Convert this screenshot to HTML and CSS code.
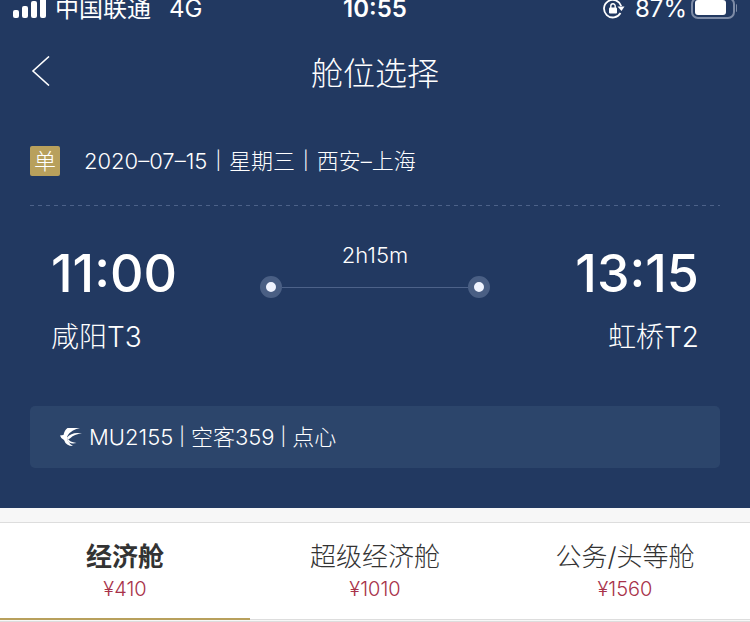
FILE: index.html
```html
<!DOCTYPE html>
<html lang="zh-CN">
<head>
    <meta charset="UTF-8">
    <meta name="viewport" content="width=device-width, initial-scale=1.0">
    <title>舱位选择</title>
    <link rel="stylesheet" href="styles.css">
</head>
<body>
    <header class="header">
        <!-- Status bar -->
        <div class="status-bar">
            <div class="status-left">
                <svg class="signal" width="34" height="18" viewBox="0 0 34 18" fill="#fff">
                    <rect x="0" y="10" width="6" height="8" rx="2"/>
                    <rect x="9" y="6" width="6" height="12" rx="2"/>
                    <rect x="18" y="1" width="6" height="17" rx="2"/>
                    <rect x="27" y="-4" width="6" height="22" rx="2"/>
                </svg>
                <span class="carrier">中国联通</span>
                <span>4G</span>
            </div>
            <div class="status-time">10:55</div>
            <div class="status-right">
                <svg width="22" height="20" viewBox="0 0 22 20" fill="none">
                    <path d="M18.200 7A8.800 8.800 0 1 0 17.500 14" stroke="#fff" stroke-width="1.800"/>
                    <path d="M14.500 7.500h7L18.500 12z" fill="#fff"/>
                    <rect x="6" y="8.500" width="8" height="6" rx="1" fill="#fff"/>
                    <path d="M7.800 9V7a2.200 2.200 0 0 1 4.400 0v2" stroke="#fff" stroke-width="1.400"/>
                </svg>
                <span>87%</span>
                <svg class="battery" width="47" height="22" viewBox="0 0 47 22">
                    <rect x="1" y="0" width="42" height="20" rx="6" fill="none" stroke="#7d8ba6" stroke-width="2"/>
                    <rect x="4" y="2" width="31" height="15" rx="3" fill="#fff"/>
                    <path d="M45 6q2 1 2 4t-2 4z" fill="#7d8ba6"/>
                </svg>
            </div>
        </div>

        <!-- Title bar -->
        <div class="nav">
            <button class="back" type="button" aria-label="返回">
                <svg width="20" height="30" viewBox="0 0 20 30" fill="none" stroke="#fff" stroke-width="1.600">
                    <path d="M19 0.500L3 15l16 14.500"/>
                </svg>
            </button>
            <h1>舱位选择</h1>
        </div>

        <!-- Trip -->
        <div class="trip">
            <span class="badge">单</span>
            <span class="info"><span>2020–07–15</span><i>|</i><span>星期三</span><i>|</i><span>西安–上海</span></span>
        </div>
        <svg class="divider" height="1"><line x1="0" y1="0.500" x2="100%" y2="0.500" stroke="#4d6289" stroke-dasharray="4 4"/></svg>

        <div class="route">
            <div class="stop">
                <div class="time">11:00</div>
                <div class="place">咸阳T3</div>
            </div>
            <div class="duration">
                <div>2h15m</div>
                <div class="track"><span class="dot"></span><span class="line"></span><span class="dot"></span></div>
            </div>
            <div class="stop stop-end">
                <div class="time">13:15</div>
                <div class="place">虹桥T2</div>
            </div>
        </div>

        <!-- Flight -->
        <div class="flight">
            <svg width="22" height="18" viewBox="0 0 22 18" fill="#fff">
                <path d="M0 7.500L3.500 7Q4.500 2 7.500 0H20Q12 1.500 8 7 6 10 8 13q1.500 3 5 5Q6 18 4 12 1 11 0 7.500z"/>
                <path d="M7 9.500Q12 3.500 22 5.500 14 6 10.500 10L7.500 12z"/>
                <path d="M7.500 10.500q2 3.500 9 4.500-7 1.500-9-2.500z"/>
            </svg>
            <span class="info"><span>MU2155</span><i>|</i><span>空客359</span><i>|</i><span>点心</span></span>
        </div>
    </header>

    <!-- Cabin tabs -->
    <nav class="tabs">
        <button class="tab active" type="button"><span class="cabin">经济舱</span><span class="price">¥410</span></button>
        <button class="tab" type="button"><span class="cabin">超级经济舱</span><span class="price">¥1010</span></button>
        <button class="tab" type="button"><span class="cabin">公务/头等舱</span><span class="price">¥1560</span></button>
    </nav>
    <main class="list"></main>
</body>
</html>
```
FILE: styles.css
```css
* {
    box-sizing: border-box;
}
body {
    margin: 0;
    background: #f7f7f7;
    font-family: Inter, "Noto Sans CJK SC", sans-serif;
    font-weight: 300;
    color: #333;
}
button {
    padding: 0;
    border: 0;
    background: none;
    font: inherit;
    color: inherit;
    cursor: pointer;
}
.header {
    background: #223961;
    color: #fff;
    padding: 0 30px 40px;
}

/* status bar */
.status-bar {
    display: grid;
    grid-template-columns: 1fr auto 1fr;
    align-content: end;
    height: 25px;
    margin: 0 -17px;
    overflow: hidden;
    font-size: 24px;
    line-height: 32px;
    font-weight: 400;
}
.status-left, .status-right {
    display: flex;
    align-items: center;
    height: 32px;
}
.status-left {
    gap: 18px;
}
.signal {
    margin-right: -10px;
}
.status-right {
    justify-content: flex-end;
    gap: 10px;
    margin-right: -1px;
}
.battery {
    margin-left: -6px;
}
.status-time {
    font-weight: 600;
}

/* title bar */
.nav {
    display: grid;
    grid-template-columns: 1fr auto 1fr;
    align-items: center;
    height: 92px;
}
.back {
    justify-self: start;
    display: flex;
}
h1 {
    margin: 0;
    font-size: 32px;
    font-weight: 300;
}

/* trip */
.trip {
    display: flex;
    align-items: center;
    gap: 24px;
    height: 88px;
}
.badge {
    width: 30px;
    border-radius: 2px;
    background: #b8a05c;
    font-size: 22px;
    line-height: 30px;
    text-align: center;
}
.info {
    display: flex;
    gap: 6px;
    font-size: 22px;
    line-height: 30px;
}
.trip .info {
    gap: 8px;
}
.info i {
    font-size: 18px;
    font-style: normal;
}
.divider {
    display: block;
    width: 100%;
}
.route {
    display: flex;
    justify-content: space-between;
    padding: 34px 21px 48px;
}
.stop {
    flex: 1;
}
.stop-end {
    text-align: right;
}
.time {
    font-size: 52px;
    line-height: 68px;
    font-weight: 500;
}
.place {
    margin-top: 8px;
    font-size: 28px;
    line-height: 42px;
}
.duration {
    width: 230px;
    font-size: 22px;
    line-height: 30px;
    text-align: center;
}
.track {
    display: flex;
    align-items: center;
    margin-top: 6px;
}
.dot {
    width: 22px;
    height: 22px;
    border: 6px solid #4a5f84;
    border-radius: 50%;
    background: #f0f4ff;
}
.line {
    flex: 1;
    height: 1px;
    background: #4d6289;
}
.flight {
    display: flex;
    align-items: center;
    gap: 7px;
    padding: 16px 30px;
    border-radius: 5px;
    background: #2c456b;
}

/* cabin tabs */
.tabs {
    display: flex;
    margin-top: 14px;
    border-top: 1px solid #ddd;
    border-bottom: 1px solid #ddd;
    background: #fff;
}
.tab {
    flex: 1;
    display: flex;
    flex-direction: column;
    align-items: center;
    padding: 15px 0 16px;
    border-bottom: 2px solid transparent;
    margin-bottom: -1px;
}
.tab.active {
    border-color: #b8a05c;
}
.cabin {
    font-size: 26px;
    line-height: 38px;
}
.active .cabin {
    font-weight: 700;
}
.price {
    font-size: 20px;
    line-height: 26px;
    color: #a8324a;
}
.list {
    margin-top: 1px;
    border-top: 1px solid #ddd;
}
```
